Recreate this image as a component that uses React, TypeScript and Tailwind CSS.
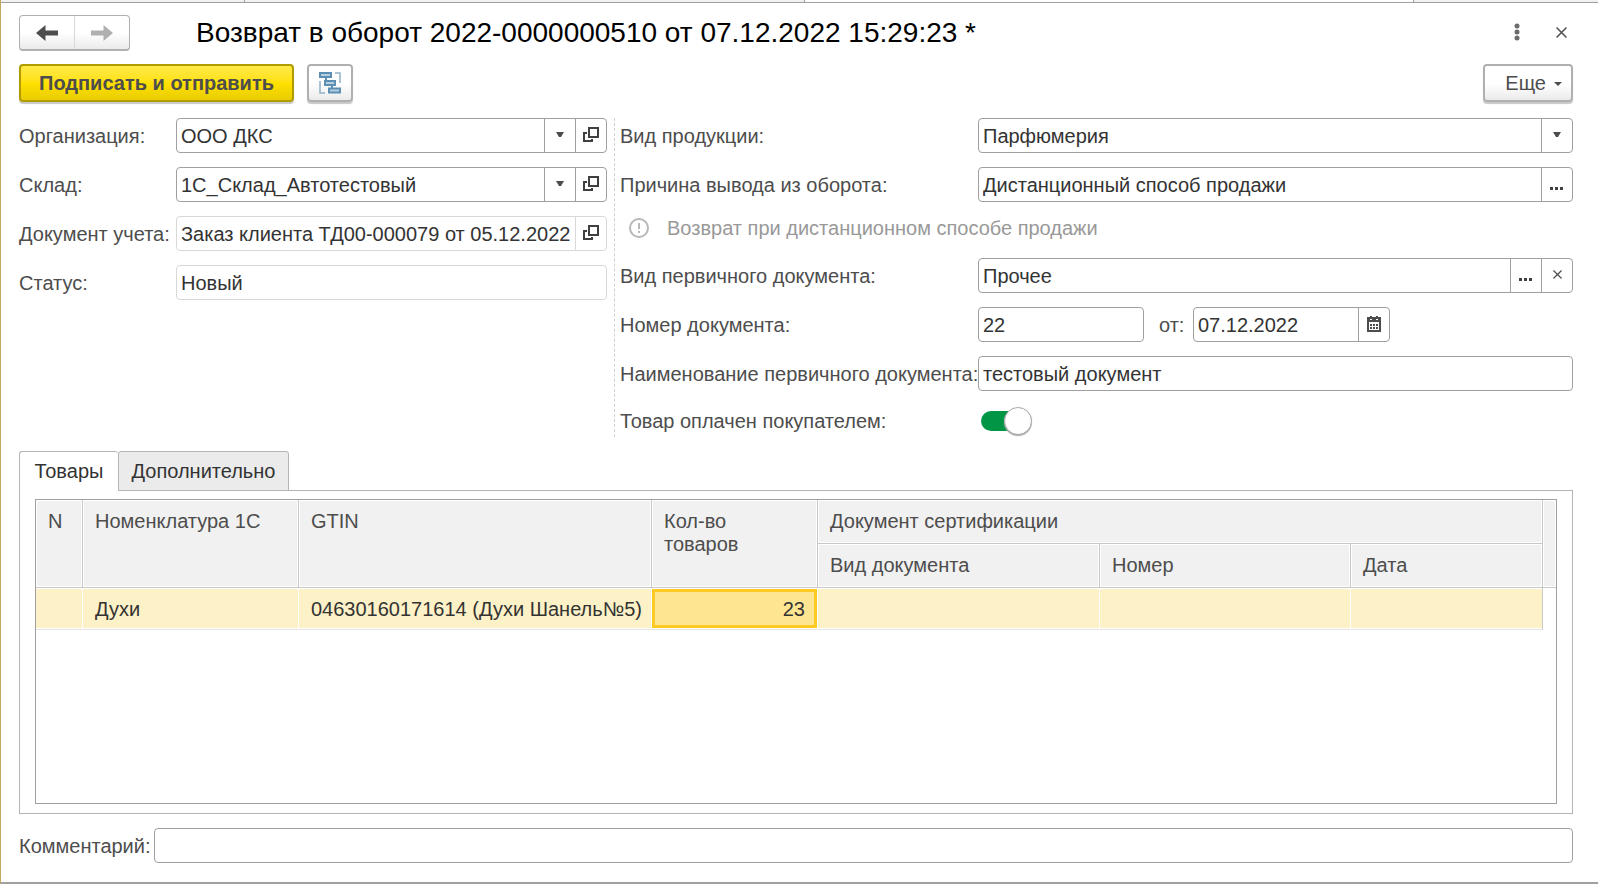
import React from 'react';

const fieldBox = 'flex h-[35px] rounded-[4px] border bg-white overflow-hidden';
const fieldInput = 'min-w-0 flex-1 bg-transparent px-1 pt-px text-[#333333] outline-none';
const cellButton = 'flex w-[31px] shrink-0 items-center justify-center border-l border-[#a0a0a0]';
const labelText = 'whitespace-nowrap pt-px text-[#4d4d4d]';
const headCell =
  'border-r border-b border-[#c8c8c8] bg-[#f1f1f1] px-3 pt-[10px] text-left align-top font-normal text-[#4d4d4d] shadow-[inset_0_0_0_1px_#ffffff]';
const bodyCell = 'border-r border-b border-r-white border-b-[#e4e4e4] bg-[#fdf1c7] px-3 pt-px shadow-[inset_0_1px_0_#ffffff,inset_0_-1px_0_#ffffff]';

const ArrowDown = () => (
  <svg width="8" height="5" viewBox="0 0 8 5" fill="#4d4d4d" aria-hidden="true">
    <path d="M0 0h8L5 5H3z" />
  </svg>
);

const OpenIcon = () => (
  <svg width="16" height="16" viewBox="0 0 16 16" fill="none" stroke="#404040" strokeWidth="2" aria-hidden="true">
    <path d="M6 1h9v9H6z" />
    <path d="M4 6H1v8h8v-2" />
  </svg>
);

const DotsIcon = () => (
  <svg width="14" height="3" viewBox="0 0 14 3" fill="#404040" aria-hidden="true">
    <path d="M0 0h3v3H0zM5 0h3v3H5zM10 0h3v3h-3z" />
  </svg>
);

const CrossIcon = ({ size }: { size: number }) => (
  <svg width={size} height={size} viewBox="0 0 10 10" fill="none" stroke="#505050" strokeWidth="1.4" aria-hidden="true">
    <path d="M.5.5l9 9M9.500.5l-9 9" />
  </svg>
);

const CalendarIcon = () => (
  <svg width="14" height="16" viewBox="0 0 14 16" aria-hidden="true">
    <path fill="#4d4d4d" fillRule="evenodd" d="M0 1h3v3h2V1h4v3h2V1h3v15H0zM2 6v8h10V6z" />
    <path fill="#4d4d4d" d="M3 0h2v3H3zM9 0h2v3H9zM3 8h2v2H3zM6 8h2v2H6zM9 8h2v2H9zM3 11h2v2H3zM6 11h2v2H6zM9 11h2v2H9z" />
  </svg>
);

const NavArrow = ({ color, flip }: { color: string; flip?: boolean }) => (
  <svg width="22" height="16" viewBox="0 0 22 16" fill={color} className={flip ? 'rotate-180' : ''} aria-hidden="true">
    <path d="M0 8l9.500-8v5.500H22v5H9.500V16z" />
  </svg>
);

const StructureIcon = () => (
  <svg width="22" height="22" viewBox="0 0 22 22" fill="none" aria-hidden="true">
    <path d="M16 1h5v10M6 21H1V9" stroke="#8fb0c8" strokeWidth="1.500" />
    <path d="M7 6v3M13 13v3" stroke="#5d8fb5" strokeWidth="2" />
    <g fill="#b5cfe0" stroke="#5d8fb5" strokeWidth="2">
      <path d="M1 1h11v4H1zM6 9h10v4H6zM10 16.500h11v4H10z" />
    </g>
  </svg>
);

type SelectFieldProps = { id: string; value: string; open?: boolean };

const SelectField = ({ id, value, open }: SelectFieldProps) => (
  <div className={`${fieldBox} border-[#a0a0a0]`}>
    <div className="relative flex min-w-0 flex-1">
      <select id={id} defaultValue={value} className="w-full appearance-none bg-transparent px-1 pt-px pr-9 text-[#333333] outline-none">
        <option value={value}>{value}</option>
      </select>
      <span className="pointer-events-none absolute inset-y-0 right-0 flex w-[31px] items-center justify-center border-l border-[#a0a0a0] pb-[2px]">
        <ArrowDown />
      </span>
    </div>
    {open && (
      <button type="button" aria-label="Открыть" className={`${cellButton} pb-[2px]`}>
        <OpenIcon />
      </button>
    )}
  </div>
);

const App = () => {
  const [paid, setPaid] = React.useState(true);

  return (
    <div className="flex min-h-screen flex-col border-b-2 border-l border-b-[#a0a0a0] border-l-[#c0a95c] bg-white font-['Liberation_Sans',Arial,sans-serif] text-[20px] leading-[23px]">
      {/* Edge of the window tabs */}
      <div className="flex h-[3px] border-b border-[#a0a0a0]">
        <div className="w-[244px] border-r border-[#a0a0a0] bg-[#f1f1f1]" />
        <div className="w-[560px] border-r border-[#a0a0a0] bg-[#f1f1f1]" />
        <div className="flex-1 border-r border-[#a0a0a0]" />
        <div className="w-[184px] bg-[#f1f1f1]" />
      </div>

      <main className="flex flex-1 flex-col pr-[25px] pb-[19px] pl-[18px]">
        <header className="mt-3 flex h-9 items-center">
          <div className="flex h-9 w-[111px] overflow-hidden rounded-[4px] border border-b-2 border-[#b0b0b0] bg-linear-to-b from-white from-50% to-[#ebebeb]">
            <button type="button" aria-label="Назад" className="flex flex-1 items-center justify-center border-r border-[#d8d8d8]">
              <NavArrow color="#4d4d4d" />
            </button>
            <button type="button" aria-label="Вперед" className="flex flex-1 items-center justify-center">
              <NavArrow color="#b0b0b0" flip />
            </button>
          </div>
          <h1 className="ml-[66px] flex-1 whitespace-nowrap text-[28px] leading-9 text-black">Возврат в оборот 2022-0000000510 от 07.12.2022 15:29:23 *</h1>
          <button type="button" aria-label="Действия" className="flex h-8 w-8 items-center justify-center pb-[2px]">
            <svg width="6" height="18" viewBox="0 0 6 18" fill="#6b6b6b" aria-hidden="true">
              <circle cx="3" cy="3" r="2.500" />
              <circle cx="3" cy="9" r="2.500" />
              <circle cx="3" cy="15" r="2.500" />
            </svg>
          </button>
          <button type="button" aria-label="Закрыть" className="ml-4 flex h-8 w-6 items-center justify-center pb-[2px]">
            <CrossIcon size={11} />
          </button>
        </header>

        <div className="mt-[13px] flex h-[38px] items-stretch">
          <button type="button" className="w-[275px] rounded-[4px] border-2 border-[#b09c00] bg-linear-to-b from-[#ffea45] via-[#ffe000] to-[#e8cd00] font-bold text-[#4d4d4d] shadow-[0_2px_1px_#c8c8c8]">
            Подписать и отправить
          </button>
          <button type="button" aria-label="Структура подчиненности" className="ml-[13px] flex w-[46px] items-center justify-center rounded-[4px] border-2 border-[#b0b0b0] bg-linear-to-b from-white from-50% to-[#ebebeb] shadow-[0_2px_1px_#c8c8c8]">
            <StructureIcon />
          </button>
          <button type="button" className="ml-auto flex w-[90px] items-center justify-end gap-2 rounded-[4px] border-2 border-[#b0b0b0] bg-linear-to-b from-white from-50% to-[#ebebeb] pr-[9px] text-[#4d4d4d] shadow-[0_2px_1px_#c8c8c8]">
            Еще
            <svg width="8" height="4" viewBox="0 0 8 4" fill="#4d4d4d" className="mt-[2px]" aria-hidden="true">
              <path d="M0 0h8L4 4z" />
            </svg>
          </button>
        </div>

        <div className="mt-4 flex">
          <div className="grid w-[588px] shrink-0 grid-cols-[157px_1fr] content-start items-center gap-y-[14px]">
            <label htmlFor="org" className={labelText}>Организация:</label>
            <SelectField id="org" value="ООО ДКС" open />
            <label htmlFor="stock" className={labelText}>Склад:</label>
            <SelectField id="stock" value="1С_Склад_Автотестовый" open />
            <label htmlFor="doc" className={labelText}>Документ учета:</label>
            <div className={`${fieldBox} border-[#d8d8d8]`}>
              <input id="doc" readOnly defaultValue="Заказ клиента ТД00-000079 от 05.12.2022" className={fieldInput} />
              <button type="button" aria-label="Открыть документ" className="flex w-[31px] shrink-0 items-center justify-center border-l border-[#d8d8d8] pb-[2px]">
                <OpenIcon />
              </button>
            </div>
            <label htmlFor="status" className={labelText}>Статус:</label>
            <div className={`${fieldBox} border-[#d8d8d8]`}>
              <input id="status" readOnly defaultValue="Новый" className={fieldInput} />
            </div>
          </div>

          <div className="ml-[7px] grid flex-1 grid-cols-[358px_1fr] items-center gap-y-[14px] border-l border-dashed border-[#d0d0d0] pl-[5px]">
            <label htmlFor="kind" className={labelText}>Вид продукции:</label>
            <SelectField id="kind" value="Парфюмерия" />
            <label htmlFor="reason" className={labelText}>Причина вывода из оборота:</label>
            <div className={`${fieldBox} border-[#a0a0a0]`}>
              <input id="reason" defaultValue="Дистанционный способ продажи" className={fieldInput} />
              <button type="button" aria-label="Выбрать причину" className={`${cellButton} pt-2`}>
                <DotsIcon />
              </button>
            </div>
            <div className="col-span-2 flex h-7 items-center gap-[18px] pb-1 pl-[9px] text-[#999999]">
              <svg width="20" height="20" viewBox="0 0 20 20" fill="none" stroke="#b8b8b8" strokeWidth="2" aria-hidden="true">
                <circle cx="10" cy="10" r="9" />
                <path d="M10 5v6M10 13v2" />
              </svg>
              Возврат при дистанционном способе продажи
            </div>
            <label htmlFor="primary" className={labelText}>Вид первичного документа:</label>
            <div className={`${fieldBox} border-[#a0a0a0]`}>
              <input id="primary" defaultValue="Прочее" className={fieldInput} />
              <button type="button" aria-label="Выбрать вид" className={`${cellButton} pt-2`}>
                <DotsIcon />
              </button>
              <button type="button" aria-label="Очистить" className={`${cellButton} pb-[2px]`}>
                <CrossIcon size={9} />
              </button>
            </div>
            <label htmlFor="number" className={labelText}>Номер документа:</label>
            <div className="flex items-center">
              <div className={`${fieldBox} w-[166px] border-[#a0a0a0]`}>
                <input id="number" defaultValue="22" className={fieldInput} />
              </div>
              <label htmlFor="date" className={`${labelText} w-[49px] pl-[15px]`}>от:</label>
              <div className={`${fieldBox} w-[197px] border-[#a0a0a0]`}>
                <input id="date" defaultValue="07.12.2022" className={fieldInput} />
                <button type="button" aria-label="Календарь" className={`${cellButton} pb-[2px]`}>
                  <CalendarIcon />
                </button>
              </div>
            </div>
            <label htmlFor="name" className={labelText}>Наименование первичного документа:</label>
            <div className={`${fieldBox} border-[#a0a0a0]`}>
              <input id="name" defaultValue="тестовый документ" className={fieldInput} />
            </div>
            <label htmlFor="paid" className={labelText}>Товар оплачен покупателем:</label>
            <div className="flex h-8 items-center pl-[3px]">
              <label className={`relative flex h-5 w-[50px] cursor-pointer items-center rounded-full ${paid ? 'bg-[#009646]' : 'bg-[#b0b0b0]'}`}>
                <input id="paid" type="checkbox" checked={paid} onChange={() => setPaid(!paid)} className="peer sr-only" />
                <span className="h-7 w-7 shrink-0 rounded-full border border-[#a8a8a8] bg-white shadow-[0_1px_1px_#a8a8a8] peer-checked:ml-[23px]" />
              </label>
            </div>
          </div>
        </div>

        {/* Tabs */}
        <div role="tablist" className="relative z-10 mt-[14px] -mb-px flex">
          <button type="button" role="tab" aria-selected="true" className="h-10 w-[99px] rounded-t-[3px] border border-r-0 border-b-0 border-[#b4b4b4] bg-white text-[#333333]">
            Товары
          </button>
          <button type="button" role="tab" aria-selected="false" className="h-10 w-[171px] rounded-t-[3px] border border-[#b4b4b4] bg-[#ebebeb] text-[#333333]">
            Дополнительно
          </button>
        </div>
        <section className="flex flex-1 flex-col border border-[#b4b4b4] px-[15px] pt-2 pb-[9px]">
          <div className="flex-1 border border-[#a0a0a0]">
            <table className="w-full table-fixed border-separate border-spacing-0">
              <colgroup>
                <col className="w-[47px]" />
                <col className="w-[216px]" />
                <col className="w-[353px]" />
                <col className="w-[166px]" />
                <col className="w-[282px]" />
                <col className="w-[251px]" />
                <col />
                <col className="w-[13px]" />
              </colgroup>
              <thead>
                <tr className="h-11">
                  <th rowSpan={2} className={headCell}>N</th>
                  <th rowSpan={2} className={headCell}>Номенклатура 1С</th>
                  <th rowSpan={2} className={headCell}>GTIN</th>
                  <th rowSpan={2} className={headCell}>Кол-во<br />товаров</th>
                  <th colSpan={3} className={headCell}>Документ сертификации</th>
                  <td rowSpan={2} className="border-b border-[#c8c8c8] bg-[#f1f1f1] shadow-[inset_0_0_0_1px_#ffffff]" />
                </tr>
                <tr className="h-11">
                  <th className={headCell}>Вид документа</th>
                  <th className={headCell}>Номер</th>
                  <th className={headCell}>Дата</th>
                </tr>
              </thead>
              <tbody className="text-[#333333]">
                <tr className="h-[42px]">
                  <td className={bodyCell} />
                  <td className={bodyCell}>Духи</td>
                  <td className={`${bodyCell} whitespace-nowrap`}>04630160171614 (Духи Шанель№5)</td>
                  <td className="border-r border-b border-r-white border-b-[#e4e4e4] py-px">
                    <div className="flex h-[39px] items-center justify-end border-3 border-[#fcca22] bg-[#fee591] pt-px pr-[9px]">23</div>
                  </td>
                  <td className={bodyCell} />
                  <td className={bodyCell} />
                  <td className="border-r border-b border-r-[#c8c8c8] border-b-[#e4e4e4] bg-[#fdf1c7] shadow-[inset_0_1px_0_#ffffff,inset_0_-1px_0_#ffffff]" />
                  <td />
                </tr>
              </tbody>
            </table>
          </div>
        </section>

        <div className="mt-[14px] flex items-center">
          <label htmlFor="comment" className={`${labelText} w-[135px]`}>Комментарий:</label>
          <div className={`${fieldBox} flex-1 border-[#a0a0a0]`}>
            <input id="comment" className={fieldInput} />
          </div>
        </div>
      </main>
    </div>
  );
};

export default App;
